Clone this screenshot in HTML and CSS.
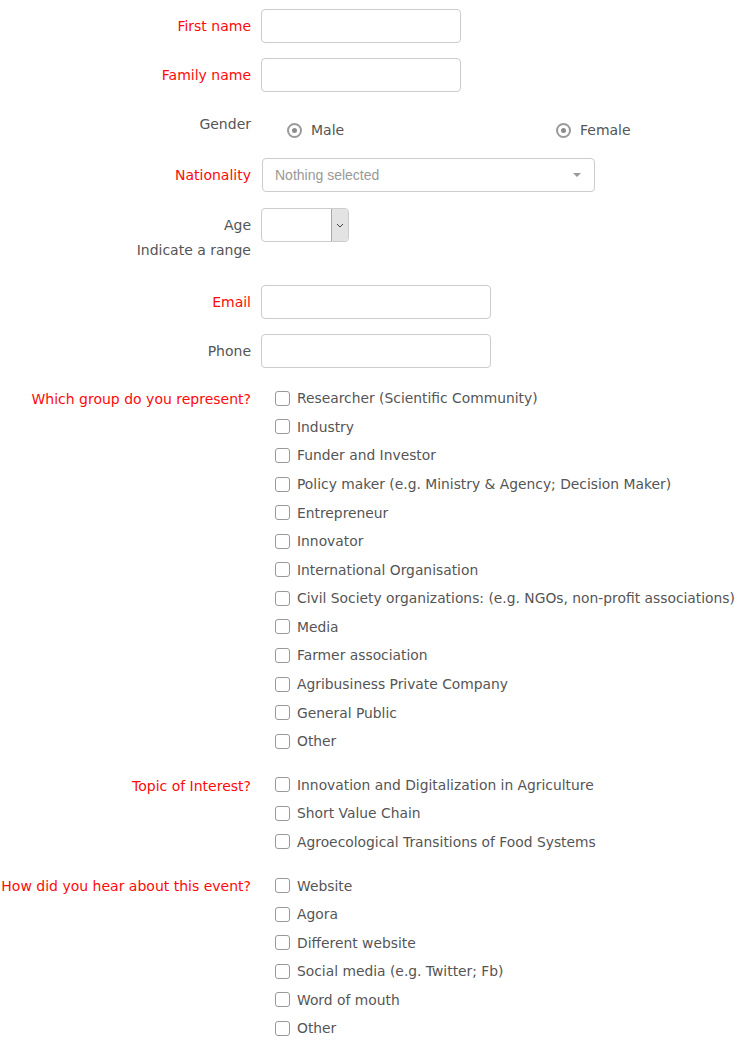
FILE: index.html
```html
<!DOCTYPE html>
<html lang="en">
<head>
<meta charset="utf-8">
<title>Registration</title>
<link rel="stylesheet" href="styles.css">
</head>
<body>
<form class="form">
  <div class="row">
    <label class="lbl req">First name</label>
    <div class="ctl"><input class="input w200" type="text"></div>
  </div>
  <div class="row">
    <label class="lbl req">Family name</label>
    <div class="ctl"><input class="input w200" type="text"></div>
  </div>
  <div class="row row-gender">
    <label class="lbl">Gender</label>
    <div class="ctl radios">
      <label class="radio"><span class="dot"></span>Male</label>
      <label class="radio"><span class="dot"></span>Female</label>
    </div>
  </div>
  <div class="row row-nat">
    <label class="lbl req">Nationality</label>
    <div class="ctl">
      <div class="picker"><span class="placeholder">Nothing selected</span><span class="caret"></span></div>
    </div>
  </div>
  <div class="row row-age">
    <div class="lbl">
      <div>Age</div>
      <div class="help">Indicate a range</div>
    </div>
    <div class="ctl">
      <div class="native-select">
        <span class="ns-value"></span>
        <span class="ns-btn"><svg width="8" height="5" viewBox="0 0 8 5"><path d="M1 1l3 3 3-3" fill="none" stroke="#444" stroke-width="1"/></svg></span>
      </div>
    </div>
  </div>
  <div class="row">
    <label class="lbl req">Email</label>
    <div class="ctl"><input class="input w230" type="email"></div>
  </div>
  <div class="row">
    <label class="lbl">Phone</label>
    <div class="ctl"><input class="input w230" type="tel"></div>
  </div>
  <div class="row row-checks">
    <label class="lbl req lbl-check">Which group do you represent?</label>
    <div class="ctl checks">
      <label class="check"><span class="box"></span>Researcher (Scientific Community)</label>
      <label class="check"><span class="box"></span>Industry</label>
      <label class="check"><span class="box"></span>Funder and Investor</label>
      <label class="check"><span class="box"></span>Policy maker (e.g. Ministry &amp; Agency; Decision Maker)</label>
      <label class="check"><span class="box"></span>Entrepreneur</label>
      <label class="check"><span class="box"></span>Innovator</label>
      <label class="check"><span class="box"></span>International Organisation</label>
      <label class="check"><span class="box"></span>Civil Society organizations: (e.g. NGOs, non-profit associations)</label>
      <label class="check"><span class="box"></span>Media</label>
      <label class="check"><span class="box"></span>Farmer association</label>
      <label class="check"><span class="box"></span>Agribusiness Private Company</label>
      <label class="check"><span class="box"></span>General Public</label>
      <label class="check"><span class="box"></span>Other</label>
    </div>
  </div>
  <div class="row row-checks">
    <label class="lbl req lbl-check">Topic of Interest?</label>
    <div class="ctl checks">
      <label class="check"><span class="box"></span>Innovation and Digitalization in Agriculture</label>
      <label class="check"><span class="box"></span>Short Value Chain</label>
      <label class="check"><span class="box"></span>Agroecological Transitions of Food Systems</label>
    </div>
  </div>
  <div class="row row-checks">
    <label class="lbl req lbl-check">How did you hear about this event?</label>
    <div class="ctl checks">
      <label class="check"><span class="box"></span>Website</label>
      <label class="check"><span class="box"></span>Agora</label>
      <label class="check"><span class="box"></span>Different website</label>
      <label class="check"><span class="box"></span>Social media (e.g. Twitter; Fb)</label>
      <label class="check"><span class="box"></span>Word of mouth</label>
      <label class="check"><span class="box"></span>Other</label>
    </div>
  </div>
</form>
</body>
</html>
```
FILE: styles.css
```css
html, body {
  margin: 0;
  padding: 0;
  background: #fff;
}
body {
  font-family: "DejaVu Sans", sans-serif;
  font-size: 14px;
  line-height: 20px;
  color: #555;
}
.form {
  padding-top: 9px;
}
.row {
  display: grid;
  grid-template-columns: 251px 1fr;
  column-gap: 10px;
  margin-bottom: 15px;
}
.lbl {
  display: block;
  text-align: right;
  padding-top: 7px;
  white-space: nowrap;
  color: #555;
}
.lbl.req {
  color: #ff0a0a;
}
.lbl-check {
  padding-top: 6px;
}
.help {
  margin-top: 5px;
}
.input {
  display: block;
  box-sizing: border-box;
  height: 34px;
  border: 1px solid #ccc;
  border-radius: 4px;
  padding: 6px 12px;
  font: inherit;
  background: #fff;
  margin: 0;
}
.w200 { width: 200px; }
.w230 { width: 230px; }

/* gender */
.row-gender {
  min-height: 36px;
}
.radios {
  display: grid;
  grid-template-columns: 269px 1fr;
  padding: 13px 0 0 26px;
}
.radio {
  display: flex;
  align-items: center;
  height: 20px;
  gap: 9px;
  color: #555;
}
.dot {
  box-sizing: border-box;
  width: 15px;
  height: 15px;
  border: 2px solid #9a9a9a;
  border-radius: 50%;
  display: flex;
  align-items: center;
  justify-content: center;
  flex: none;
}
.dot::after {
  content: "";
  width: 5px;
  height: 5px;
  border-radius: 50%;
  background: #8c8c8c;
}

/* nationality picker */
.row-nat {
  margin-bottom: 16px;
}
.picker {
  box-sizing: border-box;
  width: 333px;
  height: 34px;
  margin-left: 1px;
  border: 1px solid #ccc;
  border-radius: 4px;
  display: flex;
  align-items: center;
  justify-content: space-between;
  padding: 0 13px 0 12px;
  background: #fff;
}
.placeholder {
  font-family: "Liberation Sans", Arial, sans-serif;
  font-size: 14px;
  color: #999;
}
.caret {
  width: 0;
  height: 0;
  border-left: 4px solid transparent;
  border-right: 4px solid transparent;
  border-top: 4px solid #999;
}

/* age native select */
.row-age {
  margin-bottom: 25px;
}
.native-select {
  box-sizing: border-box;
  width: 88px;
  height: 34px;
  border: 1px solid #ccc;
  border-radius: 4px;
  display: flex;
  background: #fff;
  overflow: hidden;
}
.ns-value {
  flex: 1;
}
.ns-btn {
  width: 17px;
  box-sizing: border-box;
  background: #e3e3e3;
  border-left: 1px solid #a9a9a9;
  display: flex;
  align-items: center;
  justify-content: center;
}

/* checkboxes */
.row-checks {
  margin-bottom: 14px;
}
.checks {
  display: flex;
  flex-direction: column;
  padding-left: 14px;
  margin-top: 1px;
}
.check {
  display: flex;
  align-items: center;
  height: 28.58px;
  gap: 7px;
  white-space: nowrap;
  color: #555;
  font-size: 13.85px;
}
.box {
  box-sizing: border-box;
  width: 15px;
  height: 15px;
  border: 1.5px solid #999;
  border-radius: 3px;
  background: #fff;
  flex: none;
}
```
